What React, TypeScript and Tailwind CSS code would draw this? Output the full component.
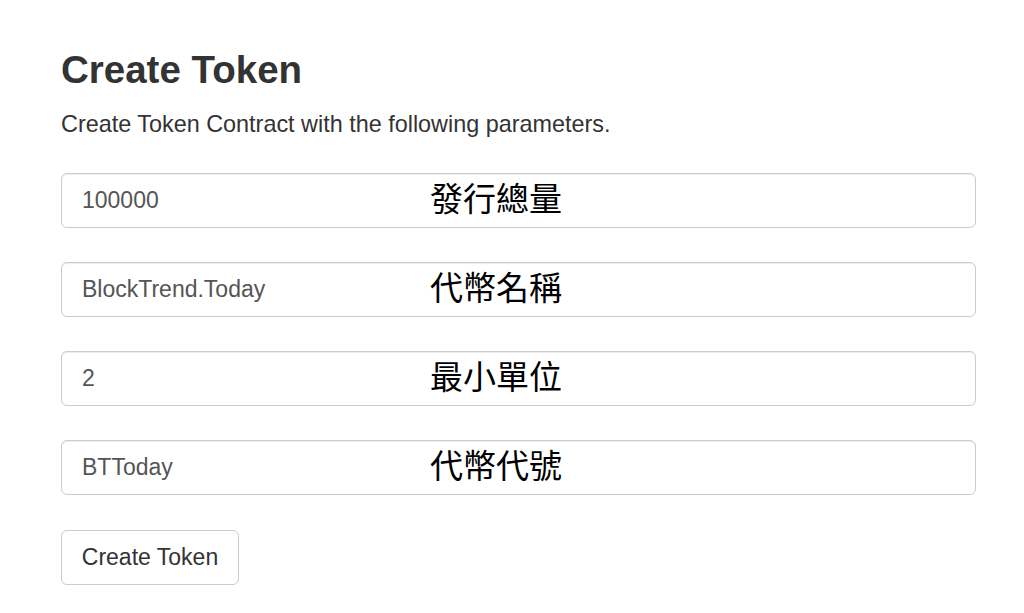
const fields = [
  { value: "100000", label: "發行總量" },
  { value: "BlockTrend.Today", label: "代幣名稱" },
  { value: "2", label: "最小單位" },
  { value: "BTToday", label: "代幣代號" },
];

export default function App() {
  return (
    <div className="min-h-[613px] w-[1024px] bg-white font-['Liberation_Sans',Arial,sans-serif] text-[#333]">
      <div className="pl-[61px] pt-[48px] w-[976px]">
        <h1 className="text-[38.5px] font-bold leading-[44px]">Create Token</h1>
        <p className="mt-[16px] text-[23.4px] leading-[32px]">Create Token Contract with the following parameters.</p>

        <div className="mt-[33px] flex flex-col gap-[34px]">
          {fields.map((f) => (
            <div key={f.value} className="relative">
              <input
                readOnly
                value={f.value}
                className="h-[55px] w-[915px] rounded-[6px] border border-[#ccc] bg-white px-[20px] text-[23px] text-[#555] shadow-[inset_0_1px_1px_rgba(0,0,0,0.075)] outline-none"
              />
              <span className="pointer-events-none absolute left-[369px] top-0 flex h-[55px] items-center pb-[6px] text-[33px] leading-none text-black font-['Noto_Sans_CJK_TC','Noto_Sans_CJK_SC',sans-serif]">
                {f.label}
              </span>
            </div>
          ))}
        </div>

        <button className="mt-[35px] h-[55px] w-[178px] rounded-[6px] border border-[#ccc] bg-white text-[23px] text-[#333]">
          Create Token
        </button>
      </div>
    </div>
  );
}
